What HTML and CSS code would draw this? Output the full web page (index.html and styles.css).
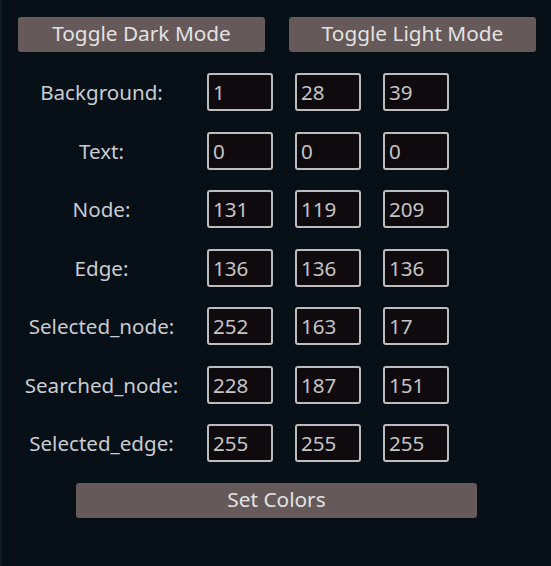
FILE: index.html
```html
<!DOCTYPE html>
<html>
<head>
<meta charset="utf-8">
<link rel="stylesheet" href="styles.css">
</head>
<body>
<div class="panel">
  <div class="toggles">
    <button class="btn toggle">Toggle Dark Mode</button>
    <button class="btn toggle">Toggle Light Mode</button>
  </div>
  <div class="grid">
    <div class="label">Background:</div>
    <input class="field" value="1"><input class="field" value="28"><input class="field" value="39">
    <div class="label">Text:</div>
    <input class="field" value="0"><input class="field" value="0"><input class="field" value="0">
    <div class="label">Node:</div>
    <input class="field" value="131"><input class="field" value="119"><input class="field" value="209">
    <div class="label">Edge:</div>
    <input class="field" value="136"><input class="field" value="136"><input class="field" value="136">
    <div class="label">Selected_node:</div>
    <input class="field" value="252"><input class="field" value="163"><input class="field" value="17">
    <div class="label">Searched_node:</div>
    <input class="field" value="228"><input class="field" value="187"><input class="field" value="151">
    <div class="label">Selected_edge:</div>
    <input class="field" value="255"><input class="field" value="255"><input class="field" value="255">
  </div>
  <div class="actions">
    <button class="btn set">Set Colors</button>
  </div>
</div>
</body>
</html>
```

FILE: styles.css
```css
html, body {
  margin: 0;
  padding: 0;
  background: #070f17;
}
body {
  width: 551px;
  height: 566px;
  overflow: hidden;
  font-family: "Noto Sans", "Open Sans", sans-serif;
  border-left: 2px solid #0e1a22;
  box-sizing: border-box;
}
.panel {
  padding-top: 17px;
}
.toggles {
  display: flex;
  gap: 24px;
  padding-left: 16px;
}
.btn {
  background: #655a59;
  color: #e4e2e2;
  border: none;
  border-radius: 3px;
  font-family: "Noto Sans", "Open Sans", sans-serif;
  font-size: 20.8px;
  height: 35px;
  padding: 0 0 2px;
  line-height: 33px;
}
.toggle {
  width: 247px;
}
.grid {
  display: grid;
  grid-template-columns: 183px 66px 66px 66px;
  column-gap: 22px;
  row-gap: 20.5px;
  margin-top: 21px;
  align-items: center;
}
.label {
  text-align: center;
  color: #c9ccd0;
  font-size: 20.6px;
  padding-right: 6px;
  margin-right: -22px;
}
.field {
  box-sizing: border-box;
  width: 66px;
  height: 38px;
  background: #0f0a0d;
  border: 2px solid #bdbdbd;
  border-radius: 3px;
  color: #c4c4c4;
  font-family: "Noto Sans", "Open Sans", sans-serif;
  font-size: 20.6px;
  padding: 0 0 0 4px;
  outline: none;
}
.actions {
  margin-top: 21px;
  padding-left: 74px;
}
.set {
  width: 401px;
}
```
